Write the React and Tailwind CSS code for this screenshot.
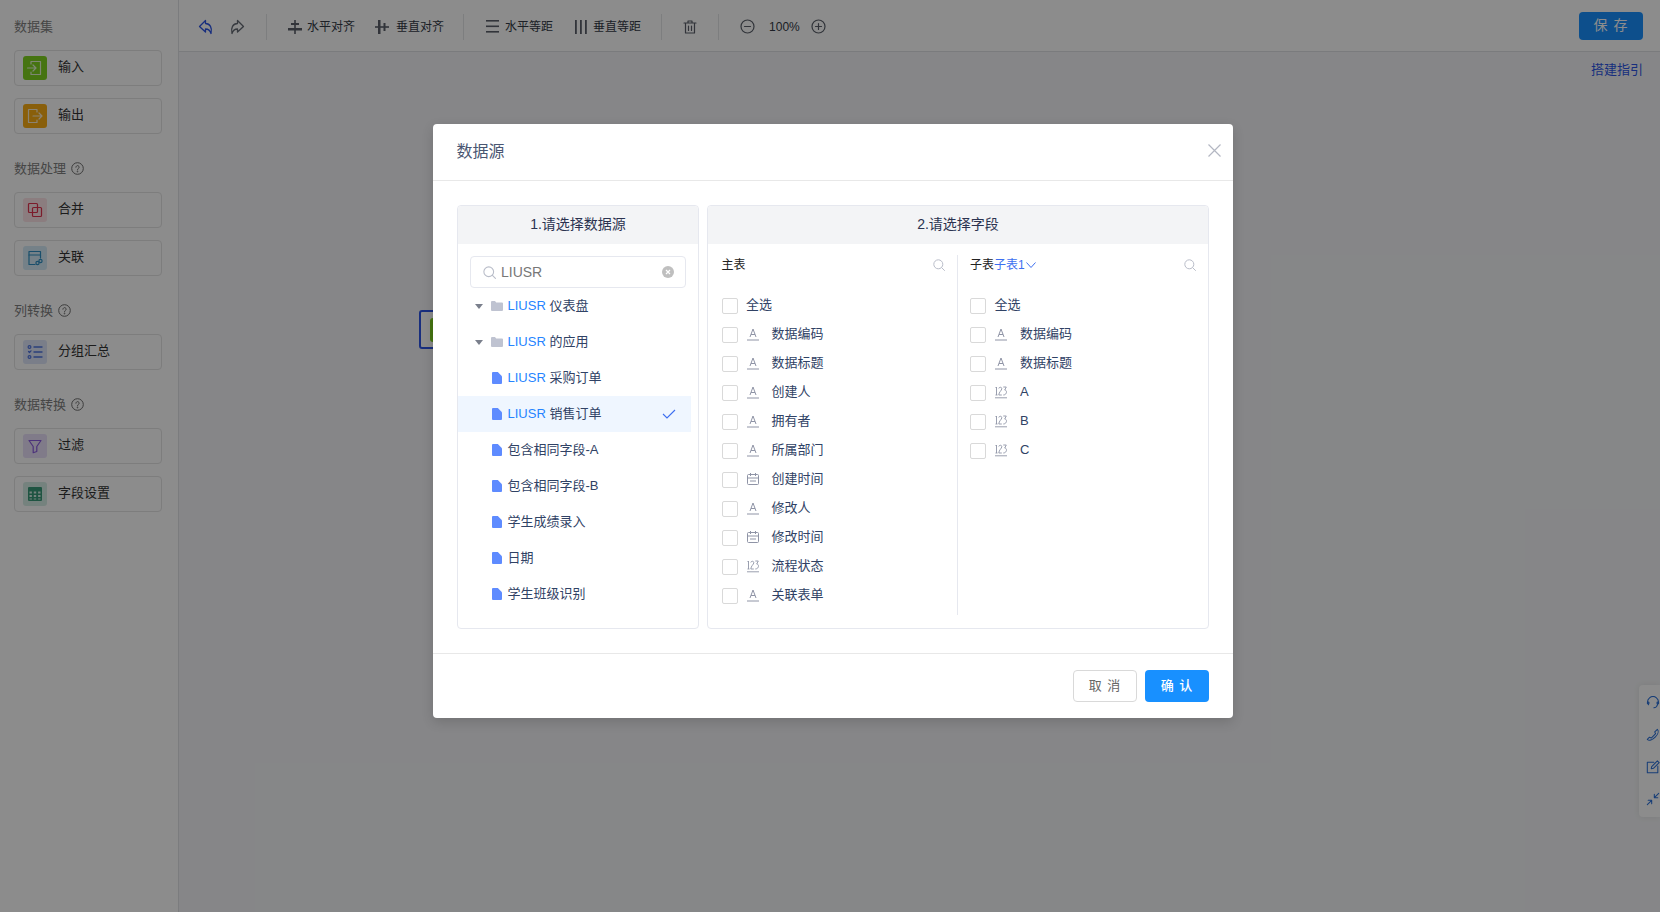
import React from "react";

const Svg = ({ s = 16, children, className = "", vb = "0 0 16 16" }) => (
  <svg width={s} height={s} viewBox={vb} fill="none" stroke="currentColor" strokeWidth="1.2" strokeLinecap="round" strokeLinejoin="round" className={className}>{children}</svg>
);

const IconIn = () => (<Svg s={20} vb="0 0 20 20" className="text-white/80"><path d="M6 6V3.5h9.5v13H6V14" /><path d="M2.5 10h8M8 7l3 3-3 3" /></Svg>);
const IconOut = () => (<Svg s={20} vb="0 0 20 20" className="text-white/80"><path d="M12 6V3.5H3.5v13H12V14" /><path d="M8 10h9M14 7l3 3-3 3" /></Svg>);
const IconMerge = () => (<Svg s={16} className="text-[#e0344f]"><rect x="1.5" y="1.5" width="9" height="9" rx="1" /><rect x="5.5" y="5.5" width="9" height="9" rx="1" /></Svg>);
const IconJoin = () => (<Svg s={18} vb="0 0 18 18" className="text-[#2f8fc4]"><path d="M9 15.5H3V2.5h11.5V9" /><path d="M3 6h11.5" /><circle cx="11.5" cy="14" r="1.6" /><circle cx="14.5" cy="12" r="1.6" /></Svg>);
const IconGroup = () => (<Svg s={16} className="text-[#4f74e0]"><circle cx="2.5" cy="3" r="1.4" /><circle cx="2.5" cy="13" r="1.4" /><path d="M1.5 7.5l1 1 1.5-1.7" /><path d="M7 3h8M7 8h8M7 13h8" strokeWidth="1.4" /></Svg>);
const IconFilter = () => (<Svg s={16} className="text-[#8b5ce0]"><path d="M2 2.5h12L9.8 8.5v5l-3.6 1.2V8.5z" /></Svg>);
const IconTable = () => (<svg width="14" height="14" viewBox="0 0 14 14" className="text-[#3a9a78]"><path fill="currentColor" fillRule="evenodd" d="M1 0h12a1 1 0 0 1 1 1v12a1 1 0 0 1-1 1H1a1 1 0 0 1-1-1V1a1 1 0 0 1 1-1zm.5 4.5v2h2.4v-2zm4.3 0v2h2.4v-2zm4.3 0v2h2.4v-2zm-8.6 3.6v2h2.4v-2zm4.3 0v2h2.4v-2zm4.3 0v2h2.4v-2zm-8.6 3.4v1h2.4v-1zm4.3 0v1h2.4v-1zm4.3 0v1h2.4v-1z" /></svg>);
const Help = () => (<svg width="13" height="13" viewBox="0 0 13 13" fill="none" stroke="#6e6e6e" strokeWidth="1"><circle cx="6.5" cy="6.5" r="5.8" /><path d="M4.9 5.2a1.6 1.6 0 1 1 2.5 1.3c-.6.4-.9.7-.9 1.4" strokeLinecap="round" /><circle cx="6.5" cy="9.6" r=".4" /></svg>);

const groups = [
  { label: "数据集", items: [{ t: "输入", bg: "bg-[#80d420]", i: <IconIn /> }, { t: "输出", bg: "bg-[#faad14]", i: <IconOut /> }] },
  { label: "数据处理", help: true, items: [{ t: "合并", bg: "bg-[#fde3e7]", i: <IconMerge /> }, { t: "关联", bg: "bg-[#d5ecf7]", i: <IconJoin /> }] },
  { label: "列转换", help: true, items: [{ t: "分组汇总", bg: "bg-[#dfe6f9]", i: <IconGroup /> }] },
  { label: "数据转换", help: true, items: [{ t: "过滤", bg: "bg-[#e9e0f9]", i: <IconFilter /> }, { t: "字段设置", bg: "bg-[#d6ede5]", i: <IconTable /> }] },
];

const Sidebar = () => (
  <aside className="w-[179px] shrink-0 border-r border-[#e1e2e6] bg-[#ffffff] px-[14px] pt-[16px]">
    {groups.map((g, k) => (
      <section key={g.label} className={k ? "mt-[24px]" : ""}>
        <div className="mb-[14px] flex h-[20px] items-center gap-[5px] pt-[1px] text-[13px] text-[#808080]">
          <span>{g.label}</span>{g.help && <Help />}
        </div>
        <div className="flex flex-col gap-[12px]">
          {g.items.map((it) => (
            <div key={it.t} className="flex h-[36px] w-[148px] items-center gap-[11px] rounded-[4px] border border-[#e4e4e4] pl-[8px] text-[13px] text-[#333]">
              <span className={`flex h-[24px] w-[24px] items-center justify-center rounded-[3px] ${it.bg}`}>{it.i}</span>
              <span className="-mt-[3px]">{it.t}</span>
            </div>
          ))}
        </div>
      </section>
    ))}
  </aside>
);

const Sep = ({ l, r }) => <span className={`h-[26px] w-px bg-[#e4e5e8] ${l} ${r}`} />;
const ToolText = ({ children }) => <span className="text-[12px] text-[#333a46]">{children}</span>;

const Toolbar = () => (
  <header className="flex h-[52px] shrink-0 items-center border-b border-[#dfe0e4] bg-white pl-[19px] pr-[17px] pt-[2px]">
    <Svg s={16} className="text-[#2d55e6]" vb="0 0 16 16"><path d="M7.500 1.500L1.500 7.500l6 5.500V10c2.500 0 4.500 1 5.500 4.500 1.500-5.500-1-10-5.500-10z" strokeWidth="1.300" /></Svg>
    <Svg s={16} className="ml-[15px] text-[#666c76]" vb="0 0 16 16"><path d="M8.500 1.500l6 6-6 5.500V10c-2.500 0-4.500 1-5.500 4.500C1.500 9 4 4.500 8.500 4.500z" strokeWidth="1.300" /></Svg>
    <Sep l="ml-[21px]" r="mr-[21px]" />
    <div className="flex items-center gap-[5px]">
      <svg width="14" height="14" viewBox="0 0 14 14" fill="#5b606a"><rect x="6.200" y="0" width="1.600" height="14" /><rect x="3" y="3" width="8" height="2" /><rect x="0" y="8" width="14" height="2.500" /></svg>
      <ToolText>水平对齐</ToolText>
    </div>
    <div className="ml-[20px] flex items-center gap-[7px]">
      <svg width="14" height="14" viewBox="0 0 14 14" fill="#5b606a"><rect x="0" y="6.200" width="14" height="1.600" /><rect x="3" y="0" width="2.500" height="14" /><rect x="8.500" y="3" width="2" height="8" /></svg>
      <ToolText>垂直对齐</ToolText>
    </div>
    <Sep l="ml-[19px]" r="mr-[22px]" />
    <div className="flex items-center gap-[6px]">
      <svg width="13" height="13" viewBox="0 0 13 13" fill="#5b606a"><rect y="0" width="13" height="1.600" /><rect y="5.500" width="13" height="1.600" /><rect y="11" width="13" height="1.600" /></svg>
      <ToolText>水平等距</ToolText>
    </div>
    <div className="ml-[22px] flex items-center gap-[6px]">
      <svg width="12" height="14" viewBox="0 0 12 14" fill="#5b606a"><rect x="0" width="1.800" height="14" /><rect x="5" width="1.800" height="14" /><rect x="10" width="1.800" height="14" /></svg>
      <ToolText>垂直等距</ToolText>
    </div>
    <Sep l="ml-[20px]" r="mr-[21px]" />
    <Svg s={14} vb="0 0 14 14" className="text-[#5b606a]"><path d="M1 3h12M5 3V1h4v2M2.500 3v10h9V3M5.500 6v4.500M8.500 6v4.500" /></Svg>
    <Sep l="ml-[21px]" r="mr-[21px]" />
    <Svg s={15} vb="0 0 15 15" className="text-[#5b606a]"><circle cx="7.500" cy="7.500" r="6.500" /><path d="M4.500 7.500h6" /></Svg>
    <span className="ml-[14px] text-[12px] text-[#333a46]">100%</span>
    <Svg s={15} vb="0 0 15 15" className="ml-[11px] text-[#5b606a]"><circle cx="7.500" cy="7.500" r="6.500" /><path d="M4.500 7.500h6M7.500 4.500v6" /></Svg>
    <button className="-mt-[2px] ml-auto h-[28px] w-[64px] rounded-[4px] bg-[#1890ff] text-[14px] tracking-[1px] text-white">保 存</button>
  </header>
);

const Folder = () => (<svg width="12" height="10" viewBox="0 0 12 10" fill="#bfc3d1"><path d="M0 1a1 1 0 0 1 1-1h3l1.200 1.500H11a1 1 0 0 1 1 1V9a1 1 0 0 1-1 1H1a1 1 0 0 1-1-1z" /></svg>);
const Tri = () => (<svg width="8" height="5" viewBox="0 0 8 5" fill="#7a7f8c"><path d="M0 0h8L4 5z" /></svg>);
const FileI = () => (<svg width="10" height="12" viewBox="0 0 10 12" fill="#5e8bff"><path d="M1 0h4.800L10 4.300V11a1 1 0 0 1-1 1H1a1 1 0 0 1-1-1V1a1 1 0 0 1 1-1z" /></svg>);
const Search = ({ s = 12 }) => (<svg width={s} height={s} viewBox="0 0 12 12" fill="none" stroke="#b9bdc9" strokeWidth="1"><circle cx="5.300" cy="5.300" r="4.500" /><path d="M8.700 8.700l2.800 2.800" strokeLinecap="round" /></svg>);

const tree = [
  { b: "LIUSR", t: " 仪表盘", folder: true },
  { b: "LIUSR", t: " 的应用", folder: true },
  { b: "LIUSR", t: " 采购订单" },
  { b: "LIUSR", t: " 销售订单", sel: true },
  { t: "包含相同字段-A" },
  { t: "包含相同字段-B" },
  { t: "学生成绩录入" },
  { t: "日期" },
  { t: "学生班级识别" },
];

const LeftPanel = () => (
  <div className="w-[242px] shrink-0 rounded-[4px] border border-[#e6e8ef]">
    <div className="flex h-[38px] items-center justify-center rounded-t-[4px] bg-[#f3f4f6] pb-[2px] text-[14px] text-[#2b3350]">1.请选择数据源</div>
    <div className="ml-[12px] mr-[12px] mt-[12px] flex h-[32px] items-center rounded-[4px] border border-[#e6e8ef] pl-[12px] pr-[11px]">
      <Search s={13} />
      <span className="ml-[5px] text-[14px] text-[#777]">LIUSR</span>
      <span className="ml-auto flex h-[12px] w-[12px] items-center justify-center rounded-full bg-[#bfbfbf]">
        <svg width="6" height="6" viewBox="0 0 6 6" stroke="#fff" strokeWidth="1.200"><path d="M1 1l4 4M5 1L1 5" /></svg>
      </span>
    </div>
    <div className="pr-[7px]">
      {tree.map((r) => (
        <div key={r.t} className={`flex h-[36px] items-center text-[13px] text-[#304265] ${r.sel ? "bg-[#eff6ff]" : ""} ${r.folder ? "pl-[17px]" : "pl-[34px]"}`}>
          {r.folder ? (<><Tri /><span className="ml-[8px]"><Folder /></span></>) : <FileI />}
          <span className={`-mt-[1px] whitespace-pre ${r.folder ? "ml-[4.5px]" : "ml-[5.5px]"}`}>
            {r.b && <span className="text-[#2684ff]">{r.b}</span>}{r.t}
          </span>
          {r.sel && (
            <svg className="ml-auto mr-[15px]" width="14" height="10" viewBox="0 0 14 10" fill="none" stroke="#3d6ff0" strokeWidth="1.100"><path d="M1 5l4 4 8-8" /></svg>
          )}
        </div>
      ))}
    </div>
  </div>
);

const TypeA = () => (<svg width="12" height="13" viewBox="0 0 12 13" fill="none" stroke="#8f94a6" strokeWidth="1"><path d="M3 9l3-8 3 8M4 6.500h4" /><path d="M0 12h12" /></svg>);
const TypeCal = () => (<svg className="-mt-[2px]" width="12" height="12" viewBox="0 0 12 12" fill="none" stroke="#8f94a6" strokeWidth="1"><rect x=".5" y="1.500" width="11" height="10" rx="1" /><path d="M.5 5h11M3.500 0v3M8.500 0v3M3 8h6" /></svg>);
const Type123 = () => (
  <svg width="12" height="13" viewBox="0 0 12 13" fill="none" stroke="#8f94a6" strokeWidth=".9"><path d="M1.500 1v8M.5 2l1-1M.5 9h2" /><path d="M3.800 2.500c.2-1.700 3-1.700 3 .2 0 1.800-3 3.300-3 6.300h3" /><path d="M8.300 1h3l-1.600 3c2.800 0 2.300 5-1.400 5" /><path d="M0 11.800h12" /></svg>
);

const main = [
  ["数据编码", "a"], ["数据标题", "a"], ["创建人", "a"], ["拥有者", "a"], ["所属部门", "a"],
  ["创建时间", "c"], ["修改人", "a"], ["修改时间", "c"], ["流程状态", "n"], ["关联表单", "a"],
];
const sub = [["数据编码", "a"], ["数据标题", "a"], ["A", "n"], ["B", "n"], ["C", "n"]];

const Box = () => <span className="h-[16px] w-[16px] shrink-0 rounded-[2px] border border-[#d9d9d9] bg-white" />;
const FieldList = ({ rows }) => (
  <div>
    <div className="flex h-[29px] items-center">
      <Box /><span className="-mt-[1px] ml-[8.500px] text-[13px] text-[#304265]">全选</span>
    </div>
    {rows.map(([t, k]) => (
      <div key={t} className="flex h-[29px] items-center">
        <Box />
        <span className="ml-[9px] flex w-[12px] justify-center">
          {k === "a" ? <TypeA /> : k === "c" ? <TypeCal /> : <Type123 />}
        </span>
        <span className="-mt-[1px] ml-[13px] text-[13px] text-[#304265]">{t}</span>
      </div>
    ))}
  </div>
);

const RightPanel = () => (
  <div className="min-w-0 flex-1 rounded-[4px] border border-[#e6e8ef]">
    <div className="flex h-[38px] items-center justify-center rounded-t-[4px] bg-[#f3f4f6] pb-[2px] text-[14px] text-[#2b3350]">2.请选择字段</div>
    <div className="flex py-[11px]">
      <div className="h-[360px] w-[250px] shrink-0 border-r border-[#e6e8ef] pl-[13.500px] pr-[12px]">
        <div className="mb-[18px] flex h-[18px] items-center justify-between pt-[1px] text-[12px] text-[#222]"><span>主表</span><Search /></div>
        <FieldList rows={main} />
      </div>
      <div className="min-w-0 flex-1 pl-[12px] pr-[12px]">
        <div className="mb-[18px] flex h-[18px] items-center pt-[1px] text-[12px] text-[#222]">
          <span>子表</span><span className="text-[#3d6ff0]">子表1</span>
          <svg className="ml-[1px]" width="10" height="6" viewBox="0 0 10 6" fill="none" stroke="#3d6ff0" strokeWidth="1"><path d="M.5.5L5 5.500 9.500.5" /></svg>
          <span className="ml-auto"><Search /></span>
        </div>
        <FieldList rows={sub} />
      </div>
    </div>
  </div>
);

const Modal = () => (
  <div className="absolute left-[433px] top-[124px] flex h-[594px] w-[800px] flex-col rounded-[4px] bg-white shadow-[0_4px_12px_rgba(0,0,0,0.15)]">
    <div className="flex h-[57px] shrink-0 items-center justify-between border-b border-[#e8e8e8] pl-[23.500px] pr-[12px]">
      <span className="text-[16px] text-[#4a5672]">数据源</span>
      <svg className="-mt-[4px]" width="13" height="13" viewBox="0 0 13 13" stroke="#b3b7c2" strokeWidth="1.200"><path d="M.5.5l12 12M12.500.5l-12 12" /></svg>
    </div>
    <div className="h-[473px] shrink-0 border-b border-[#e8e8e8] px-[24px] pt-[24px]">
      <div className="flex h-[424px] w-full gap-[8px]">
        <LeftPanel />
        <RightPanel />
      </div>
    </div>
    <div className="flex flex-1 items-start justify-end gap-[8px] px-[24px] pt-[16px]">
      <button className="h-[32px] w-[64px] rounded-[4px] border border-[#d9d9d9] bg-white text-[13px] tracking-[1px] text-[#666]">取 消</button>
      <button className="h-[32px] w-[64px] rounded-[4px] bg-[#1890ff] text-[13px] font-medium tracking-[1px] text-white">确 认</button>
    </div>
  </div>
);

const Canvas = () => (
  <main className="relative min-h-0 flex-1 bg-[#f4f5f7]">
    <div className="flex justify-end pr-[17px] pt-[8px] text-[13px] text-[#2d55e6]">搭建指引</div>
    <div className="absolute left-[240px] top-[258px] h-[39px] w-[160px] rounded-[3px] border-2 border-[#2d55e6] bg-white pl-[9px] pt-[6px]">
      <div className="h-[24px] w-[24px] rounded-[3px] bg-[#80d420]" />
    </div>
    <div className="absolute right-0 top-[633px] flex h-[132px] w-[21px] flex-col items-start gap-[18px] overflow-hidden rounded-l-[4px] bg-white pl-[7px] pt-[11px] shadow-[0_0_6px_rgba(0,0,0,0.08)]">
      <Svg s={14} vb="0 0 16 16" className="shrink-0 text-[#2d72d9]"><path d="M3 10a6 6 0 1 1 10 0" /><path d="M13 10c-.5 2.500-2 3.500-4 3.500" /><circle cx="2.500" cy="8" r="1" /><circle cx="13.500" cy="8" r="1" /></Svg>
      <Svg s={14} vb="0 0 16 16" className="shrink-0 text-[#2d72d9]"><path d="M13 1.500c2 2 .5 6-2.500 9s-7 4.500-9 2.500l2.500-2.500 2 1 5-5-1-2z" /></Svg>
      <Svg s={14} vb="0 0 16 16" className="shrink-0 text-[#2d72d9]"><path d="M9 2.500H1.500v12h12V7" /><path d="M6 10l.5-2.500L13 1l2 2-6.500 6.500z" /></Svg>
      <Svg s={14} vb="0 0 16 16" className="shrink-0 text-[#2d72d9]"><path d="M1.500 14.500l5-5M2.500 9.500h4v4M14.500 1.500l-5 5M13.500 6.500h-4v-4" /></Svg>
    </div>
  </main>
);

export default function App() {
  return (
    <div className="relative flex h-[912px] w-[1660px] overflow-hidden bg-white font-['Liberation_Sans','Noto_Sans_CJK_SC',sans-serif]">
      <Sidebar />
      <div className="flex min-w-0 flex-1 flex-col">
        <Toolbar />
        <Canvas />
      </div>
      <div className="absolute inset-0 bg-black/45" />
      <Modal />
    </div>
  );
}
